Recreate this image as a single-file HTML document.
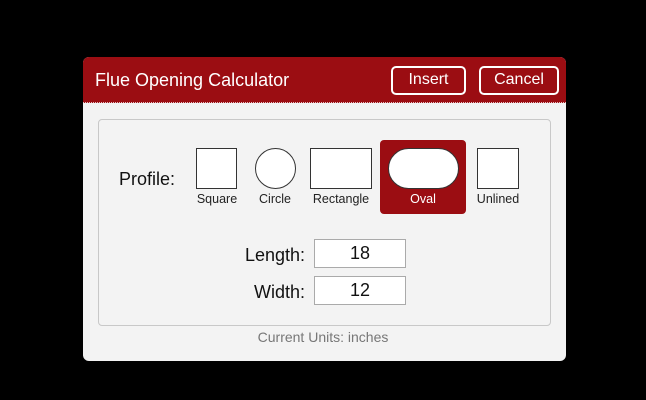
<!DOCTYPE html>
<html><head><style>
*{margin:0;padding:0;box-sizing:border-box}
body{width:646px;height:400px;background:#000;position:relative;font-family:"Liberation Sans",sans-serif;overflow:hidden}
.a{position:absolute}
.dlg{left:83px;top:57px;width:483px;height:304px;background:#f3f3f3;border-radius:6px;overflow:hidden}
.hdr{left:0;top:0;width:483px;height:46px;background:#9b0d12;border-bottom:1px dotted #e8c0c0}
.btn{border:2px solid #fff;border-radius:5px;color:#fff;font-size:16px;text-align:center;line-height:24px;height:29px}
.sh{background:#fff;border:1.5px solid #333}
.lbl{font-size:12.5px;color:#222;text-align:center;width:80px}
.inp{background:#fff;border:1px solid #aaa;width:92px;height:29px;text-align:center;font-size:18px;line-height:27px;color:#111}
.fl{font-size:18px;color:#111;text-align:right;width:120px}
</style></head><body>
<div class="a dlg">
 <div class="a hdr"></div>
 <div class="a" style="left:12px;top:13px;color:#fff;font-size:18px">Flue Opening Calculator</div>
 <div class="a btn" style="left:308px;top:9px;width:75px">Insert</div>
 <div class="a btn" style="left:396px;top:9px;width:80px">Cancel</div>
</div>
<div class="a" style="left:98px;top:119px;width:453px;height:207px;border:1px solid #c8c8c8;border-radius:4px"></div>
<div class="a" style="left:119px;top:169px;font-size:18px;color:#111">Profile:</div>
<div class="a sh" style="left:196px;top:148px;width:41px;height:41px"></div>
<div class="a sh" style="left:255px;top:148px;width:41px;height:41px;border-radius:50%"></div>
<div class="a sh" style="left:310px;top:148px;width:62px;height:41px"></div>
<div class="a" style="left:380px;top:140px;width:86px;height:74px;background:#9b0d12;border-radius:4px"></div>
<div class="a sh" style="left:388px;top:148px;width:71px;height:41px;border-radius:21px"></div>
<div class="a sh" style="left:477px;top:148px;width:42px;height:41px"></div>
<div class="a lbl" style="left:177px;top:192px">Square</div>
<div class="a lbl" style="left:235px;top:192px">Circle</div>
<div class="a lbl" style="left:301px;top:192px">Rectangle</div>
<div class="a lbl" style="left:383px;top:192px;color:#fff">Oval</div>
<div class="a lbl" style="left:458px;top:192px">Unlined</div>
<div class="a fl" style="left:185px;top:245px">Length:</div>
<div class="a inp" style="left:314px;top:239px">18</div>
<div class="a fl" style="left:185px;top:282px">Width:</div>
<div class="a inp" style="left:314px;top:276px">12</div>
<div class="a" style="left:0;width:646px;top:329px;text-align:center;font-size:14px;color:#777">Current Units: inches</div>
</body></html>
